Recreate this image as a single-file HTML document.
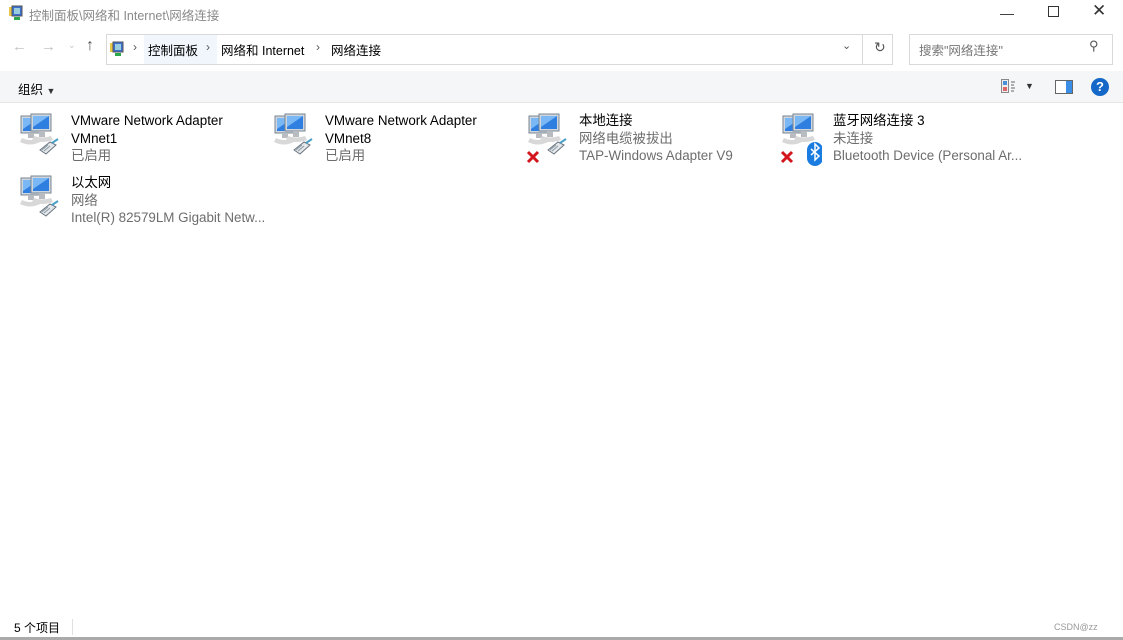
<!DOCTYPE html>
<html><head><meta charset="utf-8"><style>
*{margin:0;padding:0;box-sizing:border-box}
body{width:1123px;height:640px;background:#fff;font-family:"Liberation Sans","Noto Sans CJK SC",sans-serif;font-size:12px;color:#000;position:relative;overflow:hidden}
.a{position:absolute;white-space:nowrap}
.g{color:#6d6d6d}
.item{position:absolute;width:250px;height:60px}
.item svg{position:absolute;left:18px;top:4px}
.item .t{position:absolute;left:71px;line-height:17.5px;top:4px;font-size:13.4px;white-space:nowrap}
</style></head><body>
<!-- title -->
<svg class="a" style="left:8px;top:5px" width="16" height="16" viewBox="0 0 16 16"><rect x="1" y="2" width="10" height="9" fill="#e8c74a"/><rect x="4" y="1" width="10" height="10" fill="#3a6fd0" stroke="#555"/><rect x="6" y="3" width="6" height="6" fill="#9cd"/><rect x="6" y="12" width="6" height="3" fill="#2aa84a"/></svg>
<div class="a" style="left:29px;top:5px;color:#8a8a8a;font-size:12.5px">控制面板\网络和 Internet\网络连接</div>
<div class="a" style="left:1000px;top:5px;font-size:14px;color:#333">&#8212;</div>
<div class="a" style="left:1048px;top:6px;width:11px;height:11px;border:1px solid #333"></div>
<div class="a" style="left:1092px;top:1px;font-size:17px;color:#333">✕</div>
<!-- nav -->
<div class="a" style="left:12px;top:38px;font-size:15px;color:#c4c4c4">←</div>
<div class="a" style="left:41px;top:38px;font-size:15px;color:#c4c4c4">→</div>
<div class="a" style="left:68px;top:40px;font-size:9px;color:#c4c4c4">⌄</div>
<div class="a" style="left:86px;top:37px;font-size:16px;color:#555;font-weight:bold">↑</div>
<div class="a" style="left:106px;top:34px;width:787px;height:31px;border:1px solid #d9d9d9"></div>
<div class="a" style="left:144px;top:35px;width:73px;height:29px;background:#f0f6fc"></div>
<svg class="a" style="left:109px;top:40px" width="16" height="18" viewBox="0 0 16 16"><rect x="1" y="2" width="10" height="9" fill="#e8c74a"/><rect x="4" y="1" width="10" height="10" fill="#3a6fd0" stroke="#555"/><rect x="6" y="3" width="6" height="6" fill="#9cd"/><rect x="6" y="12" width="6" height="3" fill="#2aa84a"/></svg>
<div class="a" style="left:133px;top:40px;color:#555">›</div>
<div class="a" style="left:148px;top:40px;font-size:12.5px">控制面板</div>
<div class="a" style="left:206px;top:40px;color:#555">›</div>
<div class="a" style="left:221px;top:40px;font-size:12.5px">网络和 Internet</div>
<div class="a" style="left:316px;top:40px;color:#555">›</div>
<div class="a" style="left:331px;top:40px;font-size:12.5px">网络连接</div>
<div class="a" style="left:862px;top:35px;width:1px;height:29px;background:#d9d9d9"></div>
<div class="a" style="left:842px;top:39px;font-size:11px;color:#555">⌄</div>
<div class="a" style="left:874px;top:39px;font-size:14px;color:#555">↻</div>
<div class="a" style="left:909px;top:34px;width:204px;height:31px;border:1px solid #d9d9d9"></div>
<div class="a" style="left:919px;top:40px;color:#777;font-size:12.5px">搜索"网络连接"</div>
<div class="a" style="left:1089px;top:38px;font-size:13px;color:#555">⚲</div>
<!-- toolbar -->
<div class="a" style="left:0;top:71px;width:1123px;height:32px;background:#f5f6f7;border-bottom:1px solid #e6e6e6"></div>
<div class="a" style="left:18px;top:79px;font-size:12.5px">组织 <span style="font-size:9px;color:#333">▼</span></div>
<svg class="a" style="left:1001px;top:79px" width="16" height="15"><rect x="0.5" y="0.5" width="7" height="13" fill="#eee" stroke="#888"/><rect x="2" y="2" width="4" height="4" fill="#4a90d9"/><rect x="2" y="8" width="4" height="4" fill="#d66"/><path d="M10 3h4M10 6h3M10 9h4M10 12h3" stroke="#666"/></svg>
<div class="a" style="left:1025px;top:81px;font-size:9px;color:#333">▼</div>
<svg class="a" style="left:1055px;top:80px" width="18" height="14"><rect x="0.5" y="0.5" width="17" height="13" fill="#fff" stroke="#666"/><rect x="11" y="1" width="6" height="12" fill="#3a8ee6"/></svg>
<div class="a" style="left:1091px;top:78px;width:18px;height:18px;border-radius:50%;background:#1568c8;color:#fff;font-weight:bold;font-size:13px;text-align:center;line-height:18px">?</div>
<!-- items -->
<svg width="0" height="0" style="position:absolute"><defs>
<g id="ic">
<path d="M4 26 Q12 30 20 26 L22 30 Q12 35 2 30Z" fill="#d8d8d8"/>
<rect x="3" y="4" width="20" height="17" fill="#cfd6de" stroke="#7a8691"/>
<rect x="5" y="6" width="16" height="13" fill="#2f7fe0"/>
<path d="M5 6h16L5 17Z" fill="#7ab8f5"/>
<rect x="10" y="21" width="6" height="5" fill="#b8bcc0"/>
<rect x="13" y="2" width="20" height="17" fill="#cfd6de" stroke="#7a8691"/>
<rect x="15" y="4" width="16" height="13" fill="#2f7fe0"/>
<path d="M15 4h16L15 15Z" fill="#7ab8f5"/>
<path d="M16 24 Q24 27 33 24 L35 28 Q24 32 14 28Z" fill="#d8d8d8"/>
<rect x="21" y="19" width="6" height="6" fill="#b8bcc0"/>
</g>
<g id="pl"><path d="M22 38 L32 30 L38 33 L28 42Z" fill="#e5e8ea" stroke="#6a7580"/><path d="M34 31 L40 27" stroke="#4aa0c8" stroke-width="2"/><path d="M24 38l6-5M26 39l6-5" stroke="#8a9aa5"/></g>
</defs></svg>
<div class="item" style="left:0;top:108px"><svg width="42" height="44"><use href="#ic"/><use href="#pl"/></svg><div class="t">VMware Network Adapter<br>VMnet1<br><span class="g">已启用</span></div></div>
<div class="item" style="left:254px;top:108px"><svg width="42" height="44"><use href="#ic"/><use href="#pl"/></svg><div class="t">VMware Network Adapter<br>VMnet8<br><span class="g">已启用</span></div></div>
<div class="item" style="left:508px;top:108px"><svg width="42" height="56"><use href="#ic"/><use href="#pl"/><path d="M2 40l10 10M12 40L2 50" stroke="#d3161d" stroke-width="3"/></svg><div class="t">本地连接<br><span class="g">网络电缆被拔出<br>TAP-Windows Adapter V9</span></div></div>
<div class="item" style="left:762px;top:108px"><svg width="42" height="56"><use href="#ic"/><path d="M2 40l10 10M12 40L2 50" stroke="#d3161d" stroke-width="3"/><rect x="27" y="30" width="16" height="24" rx="8" fill="#1a7be0"/><path d="M31 37l8 7-4 4v-16l4 4-8 7" stroke="#fff" stroke-width="1.5" fill="none"/></svg><div class="t">蓝牙网络连接 3<br><span class="g">未连接<br>Bluetooth Device (Personal Ar...</span></div></div>
<div class="item" style="left:0;top:170px"><svg width="42" height="44"><use href="#ic"/><use href="#pl"/></svg><div class="t">以太网<br><span class="g">网络<br>Intel(R) 82579LM Gigabit Netw...</span></div></div>
<!-- status -->
<div class="a" style="left:14px;top:619px;font-size:12px">5 个项目</div>
<div class="a" style="left:72px;top:619px;width:1px;height:16px;background:#e0e0e0"></div>
<div class="a" style="left:1054px;top:622px;font-size:9px;color:#999">CSDN@zz</div>
<div class="a" style="left:0;top:637px;width:1123px;height:3px;background:#aaa"></div>
</body></html>
